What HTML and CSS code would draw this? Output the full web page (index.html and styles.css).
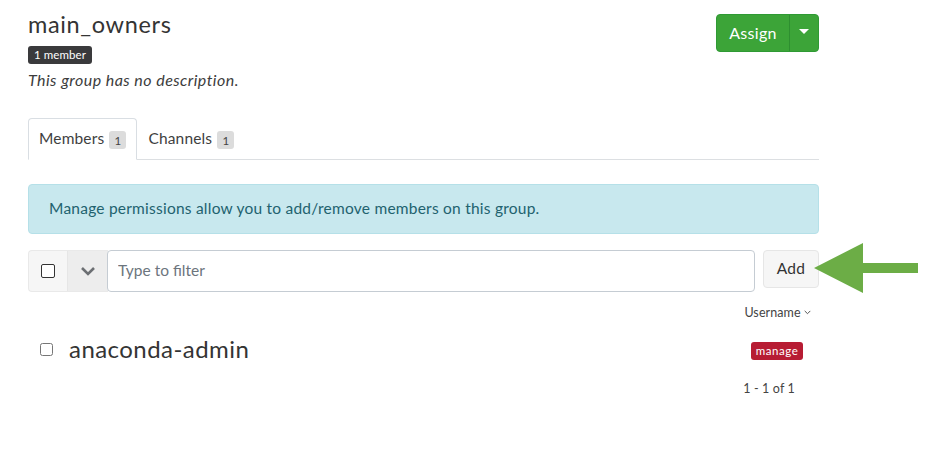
FILE: index.html
```html
<!DOCTYPE html>
<html lang="en">
<head>
<meta charset="utf-8">
<title>main_owners</title>
<link rel="stylesheet" href="styles.css">
</head>
<body>
<main class="page">
  <header class="head">
    <div class="head-info">
      <h1 class="title">main_owners</h1>
      <span class="count">1 member</span>
      <p class="desc">This group has no description.</p>
    </div>
    <div class="assign">
      <button class="assign-main">Assign</button>
      <button class="assign-caret" aria-label="More"><span class="caret"></span></button>
    </div>
  </header>
  <nav class="tabs">
    <a class="tab tab-active">Members <span class="tab-badge">1</span></a>
    <a class="tab">Channels <span class="tab-badge">1</span></a>
  </nav>
  <div class="alert">Manage permissions allow you to add/remove members on this group.</div>
  <div class="toolbar">
    <div class="bulk">
      <span class="bulk-check"><span class="box"></span></span>
      <span class="bulk-menu">
        <svg width="16" height="10" viewBox="0 0 16 10"><path d="M2 2l6 6 6-6" fill="none" stroke="#6c6f73" stroke-width="2.6"/></svg>
      </span>
    </div>
    <input class="filter" type="text" placeholder="Type to filter">
    <button class="add">Add</button>
  </div>
  <div class="sort">Username
    <svg width="7" height="5" viewBox="0 0 7 5"><path d="M.7.9l2.8 2.8L6.300.9" fill="none" stroke="#555" stroke-width="1"/></svg>
  </div>
  <div class="row">
    <input class="row-check" type="checkbox">
    <span class="name">anaconda-admin</span>
    <span class="role">manage</span>
  </div>
  <div class="pager">1 - 1 of 1</div>
</main>
<svg class="arrow" width="104" height="50" viewBox="0 0 104 50"><path d="M0 25L49 0V20H104V30H49V50Z" fill="#6cad46"/></svg>
</body>
</html>
```
FILE: styles.css
```css
* { box-sizing: border-box; }
html, body { margin: 0; padding: 0; background: #fff; }
body { position: relative; width: 948px; height: 451px; overflow: hidden; font-family: Lato, "Noto Sans", sans-serif; color: #333; }
.page { width: 791px; margin-left: 28px; padding-top: 10px; }
.head { display: flex; justify-content: space-between; align-items: flex-start; height: 108px; }
.title { margin: 0; font-size: 23.500px; line-height: 29px; font-weight: 400; color: #343434; letter-spacing: .65px; }
.count { display: block; width: 64px; height: 18px; margin-top: 7px; background: #3a3a3c; color: #fff; border-radius: 3px; font-size: 11.500px; line-height: 18px; text-align: center; letter-spacing: .1px; }
.desc { margin: 5px 0 0; font-size: 16px; line-height: 22px; font-style: italic; color: #3c3c3c; letter-spacing: .45px; }
.assign { display: flex; height: 38px; margin-top: 4px; border-radius: 4px; overflow: hidden; background: #3ca438; border: 1px solid #2f9a34; }
.assign button { border: 0; background: none; color: #fff; font: inherit; padding: 0; }
.assign-main { width: 73px; font-size: 16px !important; letter-spacing: .3px; padding-bottom: 2px !important; border-right: 1px solid #2e8f30 !important; }
.assign-caret { width: 28px; display: flex; align-items: center; justify-content: center; padding-bottom: 4px !important; }
.caret { width: 0; height: 0; border: 5px solid transparent; border-top-color: #fff; border-bottom: 0; }
.tabs { display: flex; height: 42px; border-bottom: 1px solid #dcdfe2; padding-top: 0; }
.tab { height: 42px; padding: 8px 10px 0; font-size: 15.500px; line-height: 22px; color: #3f3f3f; border: 1px solid transparent; letter-spacing: .15px; }
.tab-active { background: #fff; border-color: #d9dee3 #d9dee3 #fff; border-radius: 4px 4px 0 0; }
.tab-badge { display: inline-block; width: 17px; height: 18px; margin-left: 1px; background: #dcdcdc; border-radius: 3px; font-size: 11.500px; line-height: 19px; text-align: center; vertical-align: -1px; color: #444; letter-spacing: 0; }
.alert { height: 50px; margin-top: 24px; padding: 0 20px; background: #c8e8ee; border: 1px solid #b5e0e8; border-radius: 4px; color: #22626e; font-size: 15.500px; line-height: 47px; letter-spacing: .23px; }
.toolbar { display: flex; align-items: flex-start; margin-top: 16px; }
.bulk { display: flex; width: 80px; height: 42px; border: 1px solid #e9e9e9; border-right: 0; border-radius: 4px 0 0 4px; background: #f6f6f6; }
.bulk-check { width: 39px; display: flex; align-items: center; justify-content: center; border-right: 1px solid #e6e6e6; }
.box { width: 14px; height: 14px; border: 1.500px solid #333; border-radius: 2px; background: #fff; }
.bulk-menu { flex: 1; display: flex; align-items: center; justify-content: center; background: #ededed; }
.filter { width: 648px; height: 42px; margin-left: -1px; padding: 0 10px 2px; border: 1px solid #c5ccd3; border-radius: 4px; font: 15.500px Lato, "Noto Sans", sans-serif; color: #333; outline: 0; }
.filter::placeholder { color: #6c757d; opacity: 1; }
.add { width: 56px; height: 38px; margin-left: 8px; padding: 0 0 2px; border: 1px solid #e6e6e6; border-radius: 4px; background: #f6f6f6; color: #333; font: 15.500px Lato, "Noto Sans", sans-serif; letter-spacing: .3px; }
.sort { margin-top: 13px; padding-right: 8px; text-align: right; font-size: 12.500px; line-height: 15px; color: #444; letter-spacing: .1px; }
.sort svg { vertical-align: 2px; }
.row { display: flex; align-items: center; height: 34px; margin-top: 13px; padding-left: 12px; }
.row-check { width: 13px; height: 13px; margin: 0 17px 2px 0; }
.name { flex: 1; font-size: 24px; line-height: 34px; color: #343434; letter-spacing: .45px; margin-left: -1px; padding-bottom: 3px; }
.role { width: 52px; height: 18px; margin-right: 16px; margin-top: 2px; background: #b71c33; color: #fff; border-radius: 3px; font-size: 11.500px; line-height: 17px; text-align: center; letter-spacing: .55px; }
.pager { margin-top: 13px; padding-right: 24px; text-align: right; font-size: 12.500px; line-height: 17px; color: #444; letter-spacing: .15px; }
.arrow { position: absolute; left: 814px; top: 243px; }
```
